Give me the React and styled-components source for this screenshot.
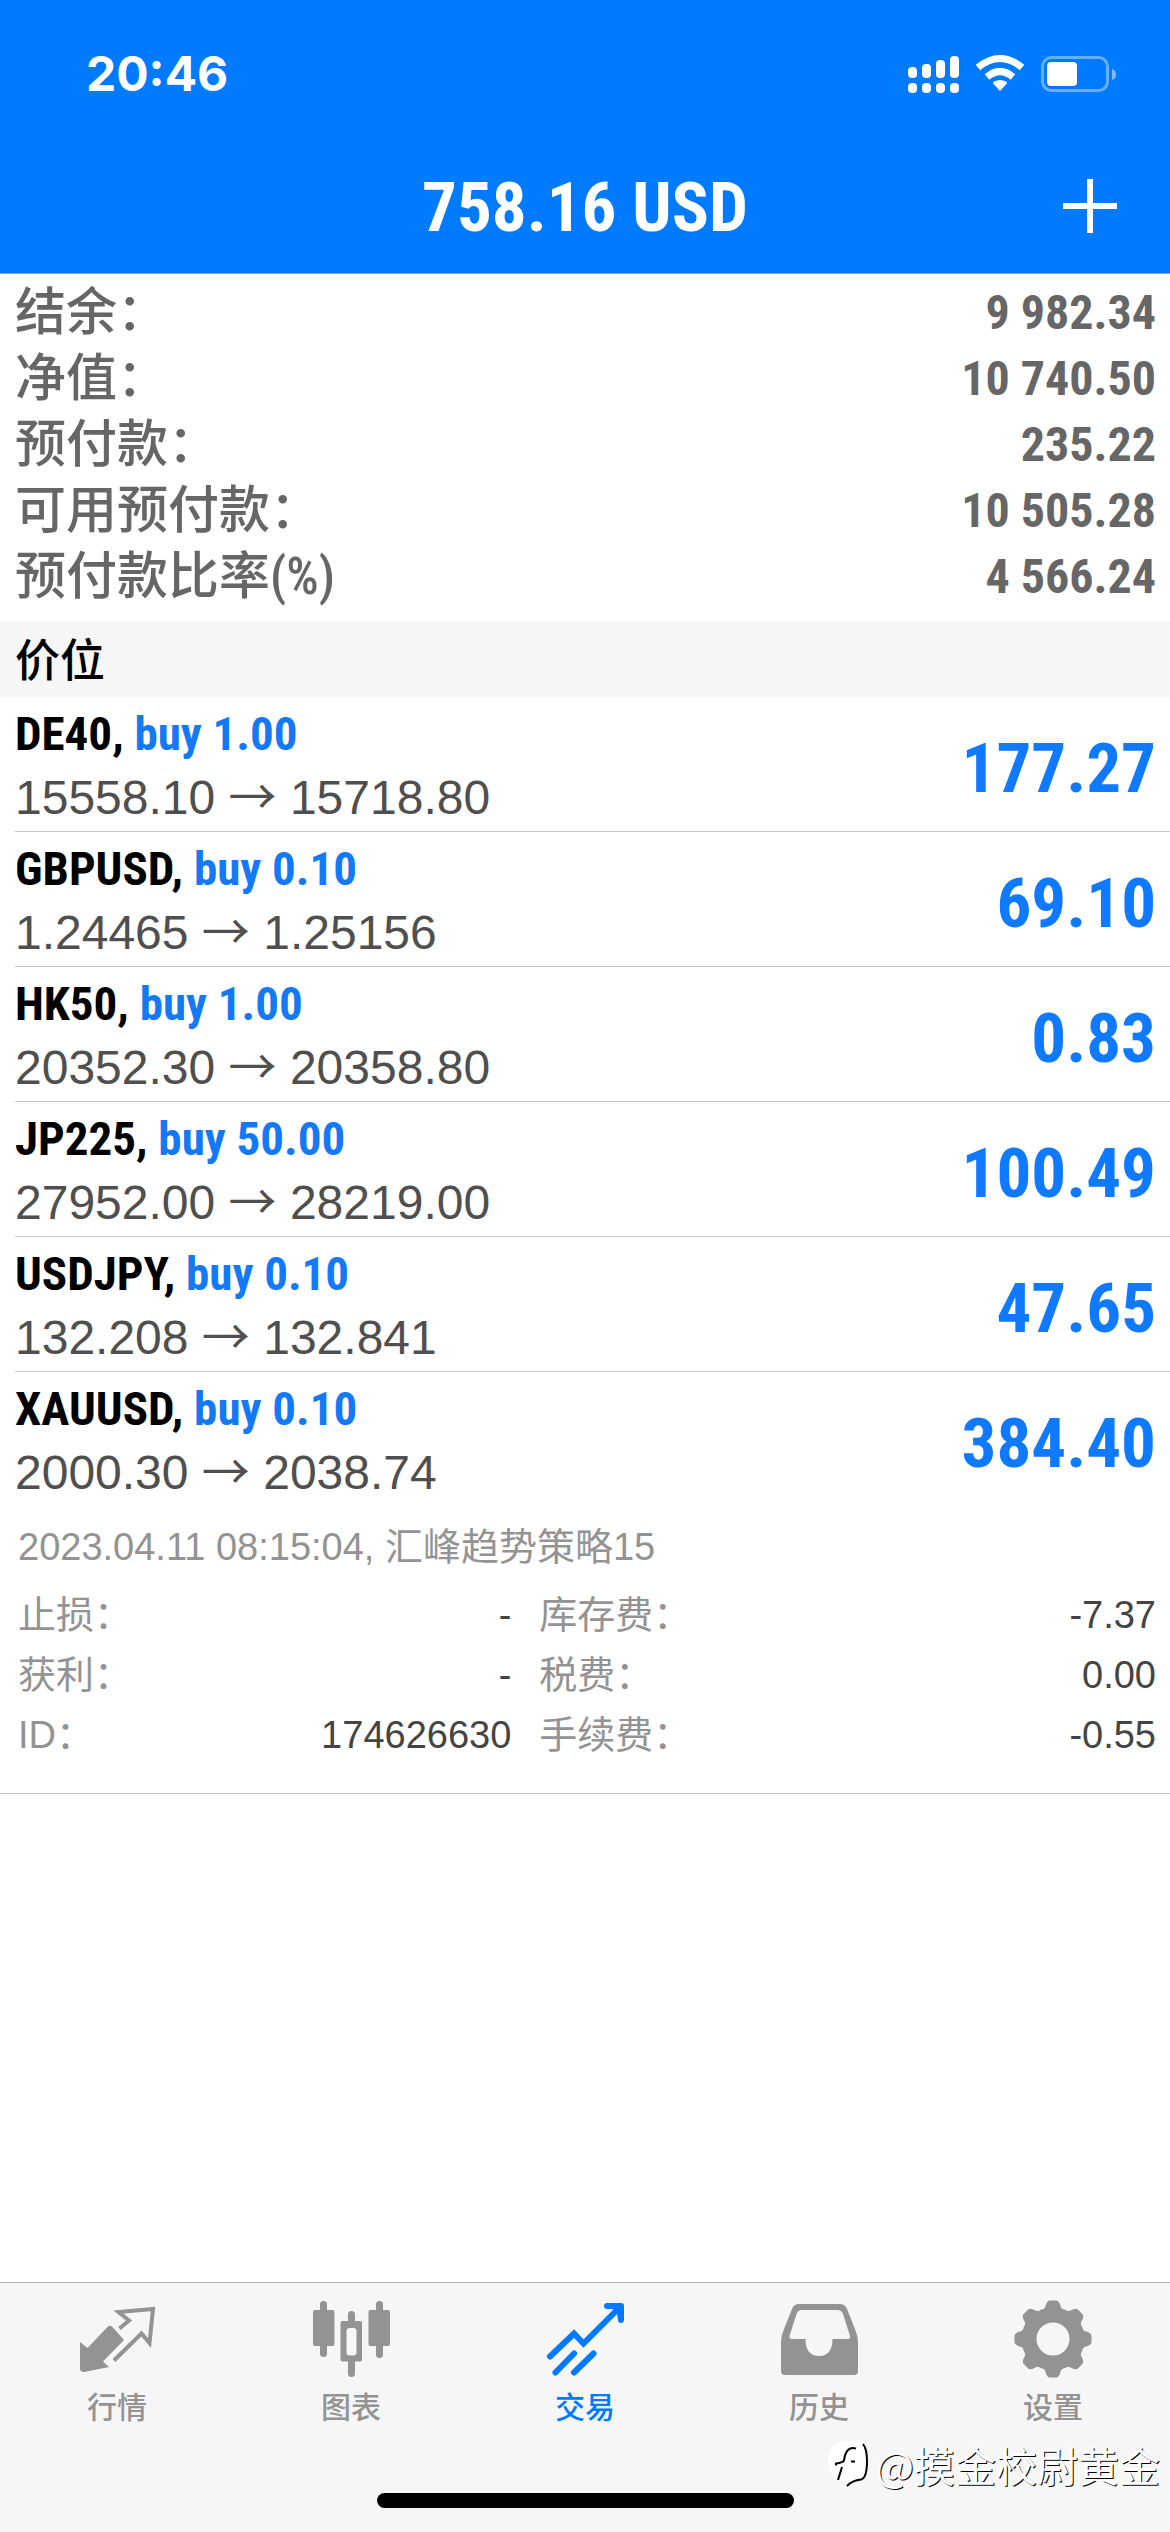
import React, { useState } from 'react';
import styled, { createGlobalStyle, css } from 'styled-components';

const BLUE = '#007aff';
const SANS = "'Liberation Sans', 'Noto Sans CJK SC', sans-serif";
const NARROW = "'Roboto Condensed', 'Liberation Sans', 'Noto Sans CJK SC', sans-serif";

const GlobalStyle = createGlobalStyle`
  * { box-sizing: border-box; }
  body, h1, h2, p, ul, dl, dd { margin: 0; padding: 0; }
  body { background: #fff; font-family: ${SANS}; }
  button { border: 0; background: none; padding: 0; font: inherit; color: inherit; }
`;

const Screen = styled.div`
  position: relative;
  display: flex;
  flex-direction: column;
  min-height: 100vh;
`;

const Header = styled.header`
  background: ${BLUE};
  border-bottom: 1px solid #8fa6c4;
  color: #fff;
`;

const StatusBar = styled.div`
  display: flex;
  align-items: center;
  justify-content: space-between;
  padding: 38px 53px 0 86px;
`;

const Clock = styled.time`
  font: 700 48px/72px Inter, sans-serif;
`;

const TitleBar = styled.div`
  display: grid;
  grid-template-columns: 1fr auto 1fr;
  align-items: center;
  padding: 46px 53px 17px;
`;

const Title = styled.h1`
  grid-column: 2;
  padding-top: 4px;
  font: 700 69px/96px ${NARROW};
`;

const AddButton = styled.button`
  justify-self: end;
  width: 54px;
  height: 54px;
`;

const Totals = styled.dl`
  padding: 6px 14px 11px 15px;
  color: #666;
`;

const TotalRow = styled.div`
  display: flex;
  justify-content: space-between;
  font: 700 48px/66px ${NARROW};
`;

const TotalLabel = styled.dt`
  font-size: 51px;
  font-weight: 500;
`;

const SectionTitle = styled.h2`
  padding: 6px 15px 0;
  background: #f6f6f6;
  color: #000;
  font: 500 45px/70px ${SANS};
`;

const List = styled.ul`
  flex: 1;
  list-style: none;
`;

const Position = styled.li`
  display: flex;
  align-items: center;
  justify-content: space-between;
  height: 135px;
  margin-left: 15px;
  padding-right: 14px;
  border-bottom: 1px solid ${p => (p.$open ? 'transparent' : '#c8c8c8')};
`;

const Symbol = styled.p`
  color: #000;
  font: 700 47px/62px ${NARROW};
`;

const Side = styled.span`
  color: #1479f6;
`;

const Prices = styled.p`
  color: #4f4f4f;
  font: 400 48px/56px ${SANS};
`;

const Arrow = styled.span`
  font-family: 'Noto Sans CJK SC', sans-serif;
`;

const Profit = styled.p`
  padding-top: 10px;
  color: #0f7aff;
  font: 700 69px/96px ${NARROW};
`;

const Details = styled.li`
  padding: 10px 14px 28px 18px;
  border-bottom: 1px solid #c8c8c8;
  color: #939393;
  font: 400 38px/60px ${SANS};
`;

const DetailGrid = styled.dl`
  display: grid;
  grid-template-columns: 4fr 5fr;
  column-gap: 28px;
  margin-top: 8px;
`;

const DetailRow = styled.div`
  display: flex;
  justify-content: space-between;
`;

const DetailValue = styled.dd`
  color: #444;
`;

const Footer = styled.footer`
  background: #f6f6f6;
  border-top: 1px solid #b2b2b2;
`;

const Tabs = styled.nav`
  display: grid;
  grid-template-columns: repeat(5, 1fr);
  padding-top: 17px;
`;

const Tab = styled.button`
  display: flex;
  flex-direction: column;
  align-items: center;
  gap: 8px;
  color: #939393;
  font: 500 30px/44px ${SANS};
  ${p => p.$active && css`color: ${BLUE};`}
`;

const HomeIndicator = styled.div`
  width: 417px;
  height: 15px;
  margin: 63px auto 24px;
  border-radius: 8px;
  background: #000;
`;

const Watermark = styled.div`
  position: absolute;
  right: 10px;
  bottom: 38px;
  display: flex;
  align-items: center;
  gap: 6px;
  color: #fff;
  font: 400 41px/60px 'Noto Sans CJK SC', sans-serif;
  text-shadow: 1px 1px 0 #000;
`;

const StatusIcons = () => (
    <svg width="210" height="40" viewBox="906 54 210 40" fill="#fff" role="img" aria-label="信号">
        {[67, 64, 60, 56].map((y, i) => (
            <React.Fragment key={y}>
                <rect x={907 + i * 14} y={y} width="9" height={78 - y} rx="4" />
                <rect x={907 + i * 14} y="83" width="9" height="10" rx="4" />
            </React.Fragment>
        ))}
        <path d="M999 91l-6-6.500q-2-2 0-3q6-3 12 0q2 1 0 3z" />
        <g fill="none" stroke="#fff" strokeWidth="7">
            <path d="M986 77q13-11 26 0" />
            <path d="M977 67.500q22-18 44 0" />
        </g>
        <rect x="1041.500" y="57.500" width="65" height="33" rx="9" fill="none" stroke="#fff" strokeOpacity=".4" strokeWidth="3" />
        <rect x="1046" y="62" width="30" height="24" rx="4" />
        <path d="M1111 69q4 1 4 5.500t-4 5.500z" fillOpacity=".5" />
    </svg>
);

const PlusIcon = () => (
    <svg width="54" height="54" viewBox="0 0 54 54" stroke="#fff" strokeWidth="6">
        <path d="M27 0v54M0 27h54" />
    </svg>
);

const TabIcon = ({ children }) => (
    <svg width="78" height="78" viewBox="0 0 78 78" fill="currentColor" aria-hidden="true">{children}</svg>
);

const QuotesIcon = () => (
    <TabIcon>
        <path d="M2 42l7.500 6L30 26.500q2-1.500 4 0L46 40L25 61.500l6 5.500l-25 5q-4 0-4-3z" />
        <path d="M41.500 28.500l9.500-8L40.500 12l34.500-3l-3.500 34l-8-9.500L36 60.500" fill="none" stroke="currentColor" strokeWidth="4" />
    </TabIcon>
);

const ChartIcon = () => (
    <TabIcon>
        <rect x="1" y="10" width="21.500" height="36" rx="2" />
        <rect x="8" y="1" width="7" height="56" rx="3.500" />
        <rect x="56.500" y="10" width="21.500" height="36" rx="2" />
        <rect x="64" y="1" width="7" height="57" rx="3.500" />
        <rect x="36" y="11" width="7" height="66" rx="3.500" />
        <rect x="28.500" y="21" width="21.500" height="40.500" rx="2" />
        <rect x="34.500" y="28" width="10" height="27.500" rx="3" fill="#f6f6f6" />
    </TabIcon>
);

const TradeIcon = () => (
    <TabIcon>
        <g fill="none" stroke="currentColor" strokeWidth="6" strokeLinecap="round">
            <path d="M4 56.500L28 33.500L37.500 43.500L74 7" />
            <path d="M9.500 72.500L28 53.500M28 72.500L47.500 53.500" />
        </g>
        <path d="M61 3h14q3 0 3 3v14q0 3-3 3q-3 0-3-3l-1-7-4-4h-6q-3 0-3-3t3-3z" />
    </TabIcon>
);

const HistoryIcon = () => (
    <TabIcon>
        <path
            fillRule="evenodd"
            d="M19 4h41q5 0 7 5l8 20q3 7 3 13v29q0 4-4 4H5q-4 0-4-4V42q0-6 3-13L12 9q2-5 7-5zM22 10q-4 0-5.500 4L9.500 36q-.5 3 2 3H25.500q0 17 13.500 17t13.500-17H68q2.500 0 2-3L63 14q-1.500-4-5.500-4z"
        />
    </TabIcon>
);

const SettingsIcon = () => (
    <TabIcon>
        <circle cx="39" cy="39" r="24" fill="none" stroke="currentColor" strokeWidth="15" />
        {[0, 45, 90, 135, 180, 225, 270, 315].map(a => (
            <path key={a} transform={`rotate(${a} 39 39)`} d="M25 12q5-1 6.500-6Q33 .5 36 .5h6q3 0 4.500 5.500q1.500 5 6.500 6z" />
        ))}
    </TabIcon>
);

const WatermarkLogo = () => (
    <svg width="42" height="48" viewBox="0 0 42 48" aria-hidden="true">
        <path d="M14 1h15q11 1 11 20q0 17-6 18.500q-8 1-13 7v-5Q2 40 1 23T14 1z" fill="#fff" />
        <g fill="none" stroke="#000" strokeWidth="2">
            <path d="M36 4q4 5 4 17q0 17-6 18.500q-9 1-14 6.500" />
            <path d="M29 8.500q-10-3-12 12q-1 2-8 3v2M24 21.500h4M15 27l-4 13" />
        </g>
    </svg>
);

const totals = [
    ['结余：', '9 982.34'],
    ['净值：', '10 740.50'],
    ['预付款：', '235.22'],
    ['可用预付款：', '10 505.28'],
    ['预付款比率(%)', '4 566.24'],
];

const positions = [
    { symbol: 'DE40', side: 'buy 1.00', open: '15558.10', current: '15718.80', profit: '177.27' },
    { symbol: 'GBPUSD', side: 'buy 0.10', open: '1.24465', current: '1.25156', profit: '69.10' },
    { symbol: 'HK50', side: 'buy 1.00', open: '20352.30', current: '20358.80', profit: '0.83' },
    { symbol: 'JP225', side: 'buy 50.00', open: '27952.00', current: '28219.00', profit: '100.49' },
    { symbol: 'USDJPY', side: 'buy 0.10', open: '132.208', current: '132.841', profit: '47.65' },
    { symbol: 'XAUUSD', side: 'buy 0.10', open: '2000.30', current: '2038.74', profit: '384.40', expanded: true },
];

const details = [
    ['止损：', '-'],
    ['库存费：', '-7.37'],
    ['获利：', '-'],
    ['税费：', '0.00'],
    ['ID：', '174626630'],
    ['手续费：', '-0.55'],
];

const tabs = [
    ['行情', QuotesIcon],
    ['图表', ChartIcon],
    ['交易', TradeIcon],
    ['历史', HistoryIcon],
    ['设置', SettingsIcon],
];

const App = () => {
    const [active, setActive] = useState('交易');
    return (
        <Screen>
            <GlobalStyle />
            <Header>
                <StatusBar>
                    <Clock>20:46</Clock>
                    <StatusIcons />
                </StatusBar>
                <TitleBar>
                    <Title>758.16 USD</Title>
                    <AddButton aria-label="添加"><PlusIcon /></AddButton>
                </TitleBar>
            </Header>
            <Totals>
                {totals.map(([label, value]) => (
                    <TotalRow key={label}>
                        <TotalLabel>{label}</TotalLabel>
                        <dd>{value}</dd>
                    </TotalRow>
                ))}
            </Totals>
            <SectionTitle>价位</SectionTitle>
            <List>
                {positions.map(({ symbol, side, open, current, profit, expanded }) => (
                    <Position key={symbol} $open={expanded}>
                        <div>
                            <Symbol>{symbol}, <Side>{side}</Side></Symbol>
                            <Prices>{open} <Arrow>→</Arrow> {current}</Prices>
                        </div>
                        <Profit>{profit}</Profit>
                    </Position>
                ))}
                <Details>
                    <p>2023.04.11 08:15:04, 汇峰趋势策略15</p>
                    <DetailGrid>
                        {details.map(([label, value]) => (
                            <DetailRow key={label}>
                                <dt>{label}</dt>
                                <DetailValue>{value}</DetailValue>
                            </DetailRow>
                        ))}
                    </DetailGrid>
                </Details>
            </List>
            <Footer>
                <Tabs>
                    {tabs.map(([label, Icon]) => (
                        <Tab key={label} $active={label === active} onClick={() => setActive(label)}>
                            <Icon />
                            {label}
                        </Tab>
                    ))}
                </Tabs>
                <HomeIndicator />
            </Footer>
            <Watermark>
                <WatermarkLogo />
                @摸金校尉黄金
            </Watermark>
        </Screen>
    );
};

export default App;
